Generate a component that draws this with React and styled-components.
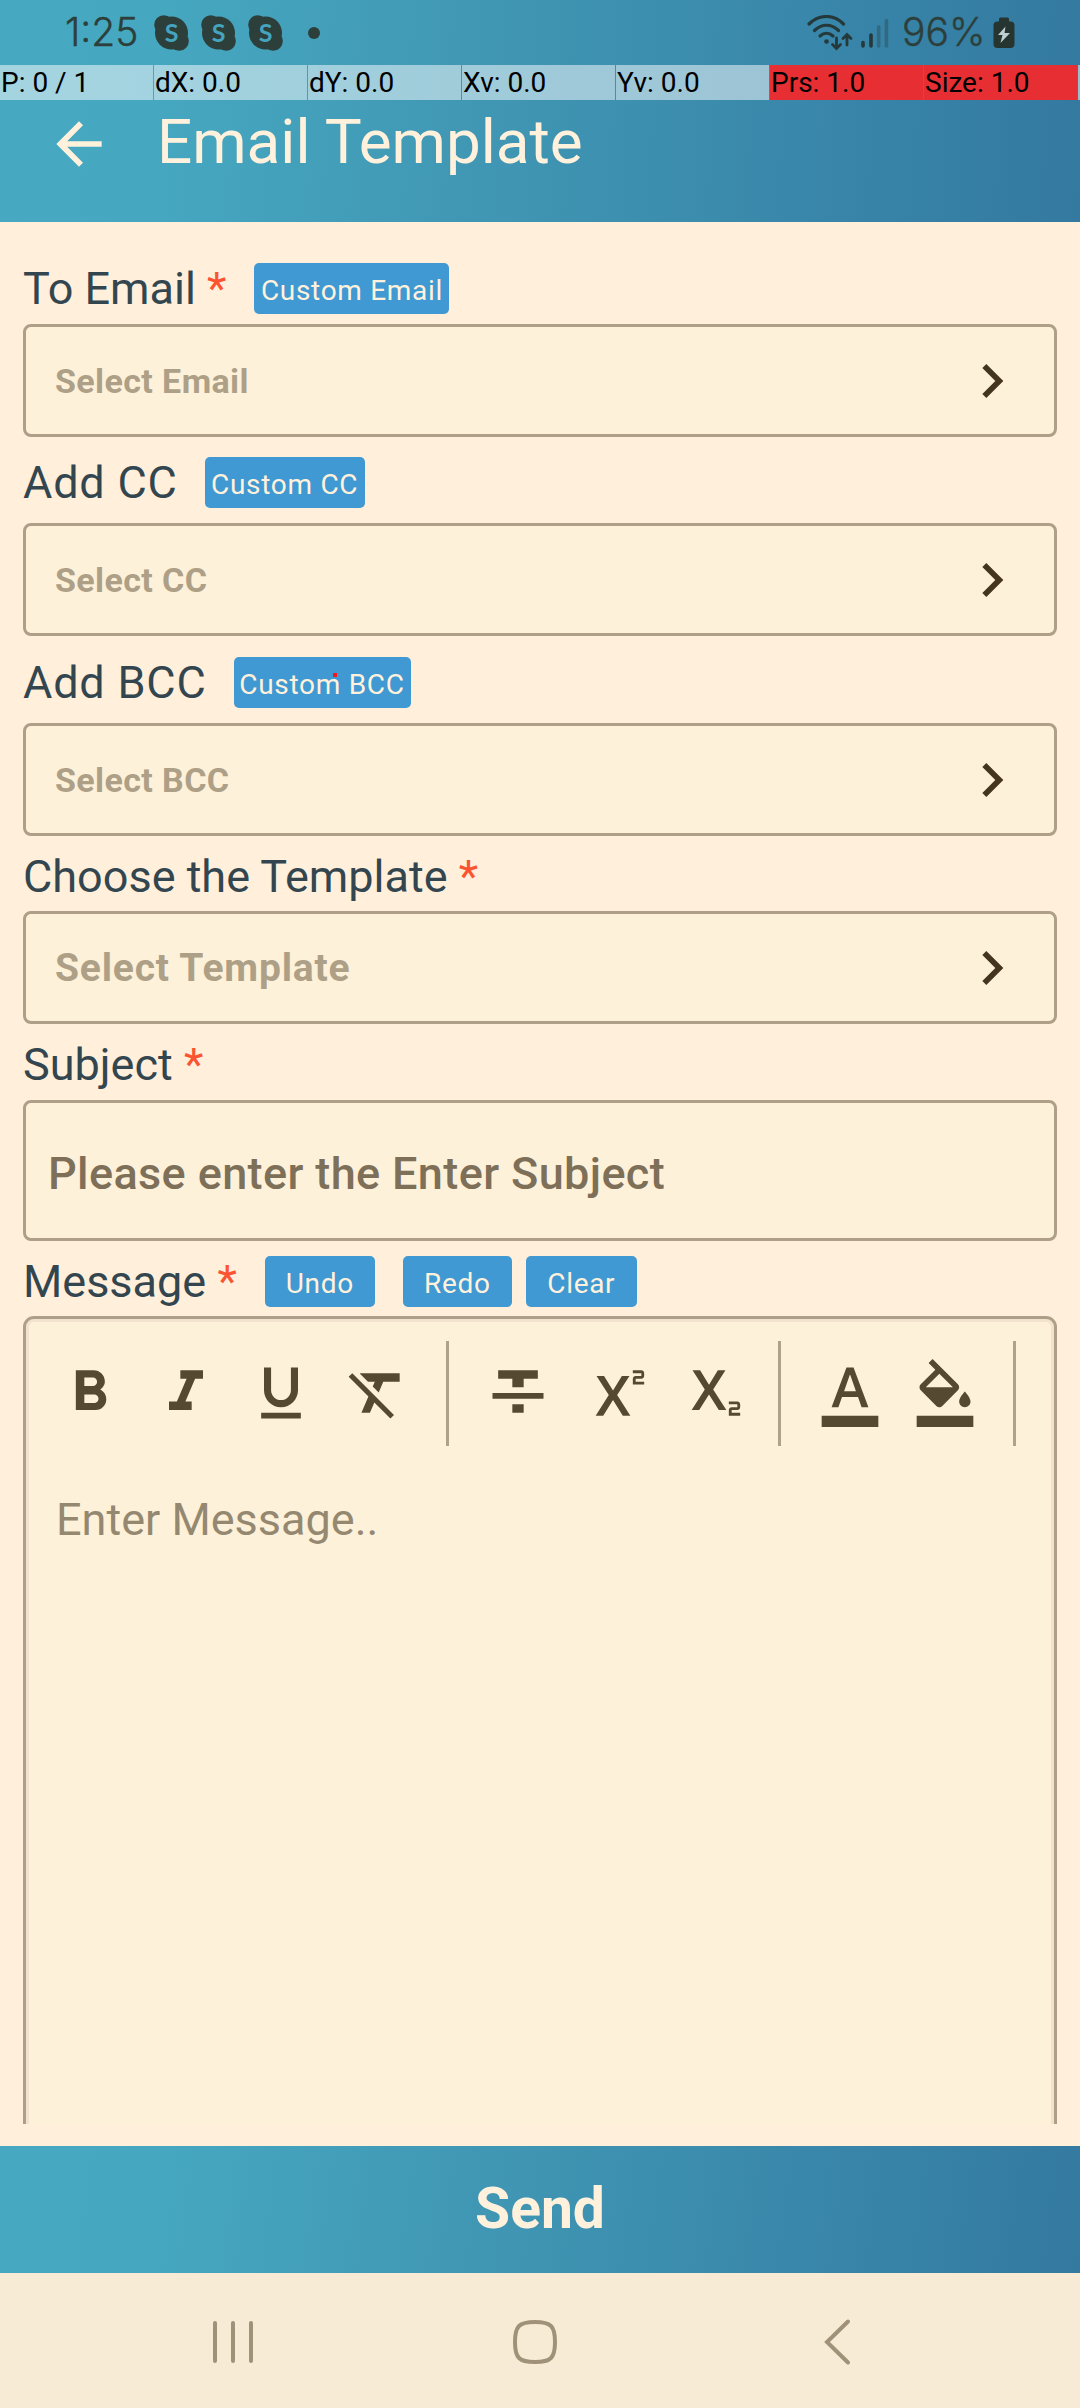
import React from "react";
import styled, { createGlobalStyle } from "styled-components";
import {
  MdArrowBack,
  MdChevronRight,
  MdFormatBold,
  MdFormatItalic,
  MdFormatUnderlined,
  MdFormatClear,
  MdFormatStrikethrough,
  MdSuperscript,
  MdSubscript,
  MdFormatColorText,
  MdFormatColorFill,
} from "react-icons/md";

const GlobalStyle = createGlobalStyle`
  * { box-sizing: border-box; }
  body {
    margin: 0;
    background: #ffefdb;
    font-family: Roboto, "Noto Sans", sans-serif;
  }
  svg { display: block; flex: none; }
`;

const Screen = styled.div`
  width: 1080px;
  height: 2408px;
  display: flex;
  flex-direction: column;
  overflow: hidden;
  background: #ffefdb;
`;

const brandStops = "#47a9c1 0%, #46a7c0 15%, #3f94b2 50%, #3885a9 78%, #3479a0 100%";

const Header = styled.header`
  height: 222px;
  flex: none;
  display: flex;
  flex-direction: column;
  background: linear-gradient(93deg, ${brandStops});
`;

const StatusBar = styled.div`
  height: 65px;
  display: flex;
  align-items: center;
  padding: 0 65px 0 65px;
  color: #2c3f3a;
`;

const StatusText = styled.span`
  width: ${(p) => p.$width}px;
  padding-bottom: 2px;
  font-family: Inter, Roboto, sans-serif;
  font-size: 39px;
  line-height: 63px;
  font-weight: 300;
  white-space: nowrap;
  -webkit-text-stroke: 0.4px #2c3f3a;
`;

const Notifications = styled.div`
  display: flex;
  align-items: center;
  gap: 12px;
  margin-left: 14px;
`;

const MoreDot = styled.span`
  width: 12px;
  height: 12px;
  margin-left: 13px;
  border-radius: 50%;
  background: #2c3f3a;
`;

const StatusRight = styled.div`
  margin-left: auto;
  display: flex;
  align-items: center;
`;

const SignalGroup = styled.div`
  display: flex;
  align-items: center;
  gap: 8px;
  margin-right: 13px;
`;

const PointerBar = styled.div`
  height: 35px;
  display: grid;
  grid-template-columns: repeat(7, 153px) 3px;
  column-gap: 1px;
`;

const PointerCell = styled.div`
  padding-left: 1px;
  font-size: 28px;
  line-height: 35px;
  white-space: nowrap;
  color: #000;
  background: ${(p) => (p.$hot ? "#e72f33" : "rgba(255, 255, 255, 0.5)")};
`;

const TitleRow = styled.div`
  display: flex;
  align-items: center;
  height: 88px;
  padding-left: 45px;
  gap: 44px;
  color: #fff1dc;
`;

const Title = styled.h1`
  margin: 0;
  padding-bottom: 4px;
  font-size: 62px;
  line-height: 84px;
  font-weight: 400;
`;

const Form = styled.main`
  height: 1902px;
  flex: none;
  overflow: hidden;
  padding: 41px 23px 0;
  display: flex;
  flex-direction: column;
`;

const LabelRow = styled.div`
  height: 51px;
  flex: none;
  display: flex;
  align-items: center;
  margin-bottom: ${(p) => p.$below}px;
`;

const Label = styled.label`
  font-size: 45px;
  line-height: 51px;
  white-space: pre;
  color: #33464f;
  letter-spacing: ${(p) => p.$spacing || 0}px;
`;

const Required = styled.span`
  color: #fb5430;
`;

const Chip = styled.button`
  position: relative;
  width: ${(p) => p.$width}px;
  height: 51px;
  margin: 0 0 0 ${(p) => p.$left}px;
  padding: 4px 0 0;
  border: 0;
  border-radius: 5px;
  font: 400 28px/47px Roboto, "Noto Sans", sans-serif;
  letter-spacing: 0.7px;
  text-align: center;
  white-space: nowrap;
  color: #fff1dc;
  background: #4099d2;
`;

const TouchPoint = styled.span`
  position: absolute;
  left: 99px;
  top: 16px;
  width: 4px;
  height: 4px;
  background: #f01818;
`;

const Field = styled.div`
  height: ${(p) => p.$height || 113}px;
  flex: none;
  display: flex;
  align-items: center;
  justify-content: space-between;
  margin-bottom: ${(p) => p.$below}px;
  padding: ${(p) => (p.$input ? "5px 28px 0 22px" : "0 28px 0 29px")};
  border: 3px solid #ae9f88;
  border-radius: 8px;
  background: #fef1da;
`;

const Placeholder = styled.span`
  padding-top: 1px;
  font-size: ${(p) => p.$size}px;
  font-weight: ${(p) => p.$weight || 700};
  letter-spacing: ${(p) => p.$spacing || 0}px;
  color: ${(p) => p.$color || "#ada087"};
`;

const Editor = styled.section`
  height: 1000px;
  flex: none;
  border: 3px solid #ae9f88;
  border-radius: 11px;
  background: #fef1da;
  box-shadow: inset 0 0 0 3px #f1e3cd;
`;

const Toolbar = styled.div`
  display: flex;
  align-items: center;
  height: 105px;
  margin-top: 22px;
  padding-left: 30px;
  color: #554932;
`;

const Tools = styled.div`
  display: flex;
  gap: 27.5px;
  padding-bottom: 1px;
`;

const Divider = styled.span`
  width: 3px;
  height: 105px;
  margin: 0 ${(p) => p.$right}px 0 ${(p) => p.$left}px;
  background: #afa28a;
`;

const EditorText = styled.p`
  margin: 47px 0 0 30px;
  font-size: 45px;
  line-height: 54px;
  color: #958871;
`;

const SendBar = styled.button`
  height: 127px;
  flex: none;
  margin: 22px 0 0;
  padding: 0 0 1px;
  border: 0;
  font: 700 57px/124px Roboto, "Noto Sans", sans-serif;
  color: #fff1dc;
  background: linear-gradient(98deg, ${brandStops});
`;

const NavBar = styled.nav`
  height: 135px;
  flex: none;
  display: flex;
  align-items: center;
  padding-left: 205px;
  background: #f8ebd6;
`;

const NavIcon = styled.svg`
  width: 56px;
  height: 56px;
  margin-top: 2px;
  margin-right: ${(p) => p.$right || 0}px;
  fill: none;
  stroke: #a09278;
  stroke-width: 4;
  stroke-linecap: round;
`;

const SkypeLetter = styled.text`
  font: 700 25px Lato, Roboto, sans-serif;
  fill: #45a4be;
  text-anchor: middle;
`;

const SkypeBadge = () => (
  <svg width="35" height="36" viewBox="0 0 35 36">
    <g fill="#2c3f3a">
      <circle cx="17.500" cy="18" r="16.500" />
      <circle cx="9.800" cy="9.800" r="9.600" />
      <circle cx="25.200" cy="26.200" r="9.600" />
    </g>
    <SkypeLetter x="17.500" y="26.500">S</SkypeLetter>
  </svg>
);

const Wifi = () => (
  <svg width="46" height="36" viewBox="0 0 46 36" fill="none" stroke="#26393a" strokeWidth="3.200" strokeLinecap="round">
    <path d="M2 9C12.500-1 26.500-1 36.500 9" />
    <path d="M7.500 15.500C14.500 8.500 24.500 8.500 31.500 15.500" />
    <path d="M13 21C17 17.500 22 17.500 26 21" />
    <circle cx="19.500" cy="26.500" r="2.300" fill="#26393a" stroke="none" />
    <path d="M29.500 23v10M25.500 29.500l4 4 4-4M40 30V20M36 23.500l4-4 4 4" strokeWidth="2.800" />
  </svg>
);

const Signal = () => (
  <svg width="28" height="32" viewBox="0 0 28 32" strokeWidth="3.600" strokeLinecap="round">
    <path d="M2 25.500v3.500M10 18v11" stroke="#26393a" />
    <path d="M17.700 10v19M25.400 3.500v25.500" stroke="#26393a" strokeOpacity="0.350" />
  </svg>
);

const Battery = () => (
  <svg width="22" height="32" viewBox="0 0 22 32">
    <path d="M7.500 0.500h7a1.500 1.500 0 0 1 1.500 1.500v2.500h1.500a4 4 0 0 1 4 4V27a4 4 0 0 1-4 4h-13a4 4 0 0 1-4-4V8.500a4 4 0 0 1 4-4H6V2a1.500 1.500 0 0 1 1.500-1.500z" fill="#26352f" />
    <path d="M12.500 9.500L5 18h4.500L7.500 26l9.500-10h-5.500z" fill="#bdd0d0" />
  </svg>
);

const pointerCells = [
  { text: "P: 0 / 1" },
  { text: "dX: 0.0" },
  { text: "dY: 0.0" },
  { text: "Xv: 0.0" },
  { text: "Yv: 0.0" },
  { text: "Prs: 1.0", hot: true },
  { text: "Size: 1.0", hot: true },
];

const Select = ({ text, below, size = 34, spacing = 0.4 }) => (
  <Field $below={below}>
    <Placeholder $size={size} $spacing={spacing}>{text}</Placeholder>
    <MdChevronRight size={68} color="#43351f" />
  </Field>
);

export default function App() {
  return (
    <Screen>
      <GlobalStyle />
      <Header>
        <StatusBar>
          <StatusText $width={75}>1:25</StatusText>
          <Notifications>
            <SkypeBadge />
            <SkypeBadge />
            <SkypeBadge />
            <MoreDot />
          </Notifications>
          <StatusRight>
            <SignalGroup>
              <Wifi />
              <Signal />
            </SignalGroup>
            <StatusText $width={91}>96%</StatusText>
            <Battery />
          </StatusRight>
        </StatusBar>
        <PointerBar>
          {pointerCells.map((c) => (
            <PointerCell key={c.text} $hot={c.hot}>{c.text}</PointerCell>
          ))}
          <PointerCell />
        </PointerBar>
        <TitleRow>
          <MdArrowBack size={68} />
          <Title>Email Template</Title>
        </TitleRow>
      </Header>

      <Form>
        <LabelRow $below={10}>
          <Label>To Email <Required>*</Required></Label>
          <Chip $left={28} $width={195}>Custom Email</Chip>
        </LabelRow>
        <Select text="Select Email" below={20} />

        <LabelRow $below={15}>
          <Label $spacing={0.8}>Add CC</Label>
          <Chip $left={27} $width={160}>Custom CC</Chip>
        </LabelRow>
        <Select text="Select CC" below={21} />

        <LabelRow $below={15}>
          <Label $spacing={0.8}>Add BCC</Label>
          <Chip $left={27} $width={177}>Custom BCC<TouchPoint /></Chip>
        </LabelRow>
        <Select text="Select BCC" below={15} />

        <LabelRow $below={9}>
          <Label>Choose the Template <Required>*</Required></Label>
        </LabelRow>
        <Select text="Select Template" below={15} size={39} spacing={0.8} />

        <LabelRow $below={10}>
          <Label>Subject <Required>*</Required></Label>
        </LabelRow>
        <Field $height={141} $below={15} $input>
          <Placeholder $size={45} $weight={500} $spacing={0.38} $color="#7d6f58">Please enter the Enter Subject</Placeholder>
        </Field>

        <LabelRow $below={9}>
          <Label>Message <Required>*</Required></Label>
          <Chip $left={28} $width={110}>Undo</Chip>
          <Chip $left={28} $width={109}>Redo</Chip>
          <Chip $left={14} $width={111}>Clear</Chip>
        </LabelRow>
        <Editor>
          <Toolbar>
            <Tools>
              <MdFormatBold size={68} />
              <MdFormatItalic size={68} />
              <MdFormatUnderlined size={68} />
              <MdFormatClear size={68} />
            </Tools>
            <Divider $left={35} $right={35} />
            <Tools>
              <MdFormatStrikethrough size={68} />
              <MdSuperscript size={68} />
              <MdSubscript size={68} />
            </Tools>
            <Divider $left={35} $right={35} />
            <Tools>
              <MdFormatColorText size={68} />
              <MdFormatColorFill size={68} />
            </Tools>
            <Divider $left={34} $right={0} />
          </Toolbar>
          <EditorText>Enter Message..</EditorText>
        </Editor>
      </Form>

      <SendBar>Send</SendBar>
      <NavBar>
        <NavIcon viewBox="0 0 56 56" $right={246}>
          <path d="M10 9v38M28 9v38M46 9v38" />
        </NavIcon>
        <NavIcon viewBox="0 0 56 56" $right={247}>
          <path d="M8 28C8 12 12 8 28 8S48 12 48 28 44 48 28 48 8 44 8 28z" />
        </NavIcon>
        <NavIcon viewBox="0 0 56 56">
          <path d="M38 7.500L17 28l21 20.500" />
        </NavIcon>
      </NavBar>
    </Screen>
  );
}
